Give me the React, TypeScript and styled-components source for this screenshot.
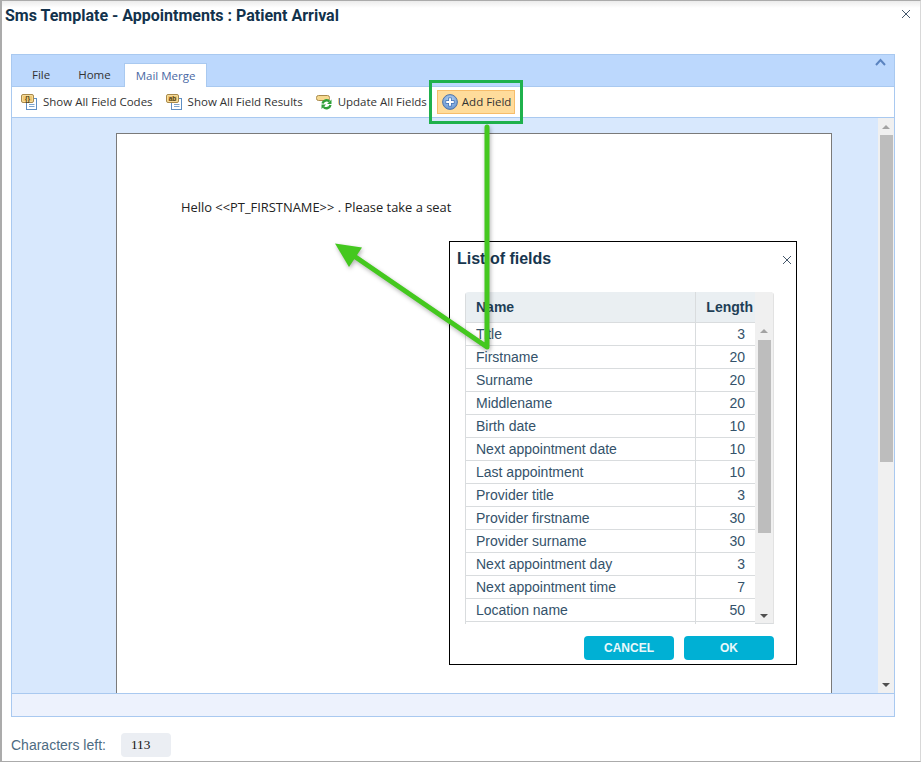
import React from "react";
import styled, { createGlobalStyle } from "styled-components";

const Global = createGlobalStyle`
  html, body { margin: 0; padding: 0; background: #fff; }
  #root { width: 921px; height: 762px; }
  * { box-sizing: border-box; }
`;

const Win = styled.div`
  position: relative;
  width: 921px;
  height: 762px;
  overflow: hidden;
  background: #fff;
  border-left: 2px solid #ababab;
  border-right: 1px solid #d8d8d8;
  border-top: 1px solid #ababab;
  border-bottom: 1px solid #ababab;
  display: flex;
  flex-direction: column;
  padding: 0 25px 0 9px;
`;
const TitleBar = styled.div`
  height: 53px;
  margin: 0 -25px 0 -9px;
  padding: 5px 10px 0 3px;
  display: flex;
  justify-content: space-between;
  align-items: flex-start;
  background: linear-gradient(#ececec 0, #fff 7px);
`;
const Title = styled.h1`
  margin: 0;
  font: 700 16px/20px Roboto, "Liberation Sans", sans-serif;
  color: #12324c;
  white-space: nowrap;
`;
const CloseBtn = styled.svg`
  display: block;
  margin-top: 4px;
  width: 8px;
  height: 8px;
  stroke: #44566a;
  stroke-width: 1;
  fill: none;
`;
const Editor = styled.div`
  width: 884px;
  height: 663px;
  flex: none;
  border: 1px solid #a9c9f0;
  display: flex;
  flex-direction: column;
  background: #d8e8fd;
`;
const TabBar = styled.div`
  height: 32px;
  flex: none;
  background: #bcd8fd;
  display: flex;
  align-items: flex-end;
  padding-left: 9px;
  position: relative;
  border-bottom: 1px solid #a9c9f0;
`;
const Tab = styled.div<{ $active?: boolean }>`
  height: ${(p) => (p.$active ? "24px" : "23px")};
  padding: ${(p) => (p.$active ? "0 11px" : "0 10px 0 11px")};
  margin-bottom: ${(p) => (p.$active ? "-1px" : "0")};
  margin-left: ${(p) => (p.$active ? "-4px" : "0")};
  margin-right: ${(p) => (p.$active ? "0" : "7px")};
  display: flex;
  align-items: center;
  font: 11.5px "Open Sans", sans-serif;
  color: ${(p) => (p.$active ? "#4a69a4" : "#333")};
  background: ${(p) => (p.$active ? "#fff" : "transparent")};
  border: ${(p) => (p.$active ? "1px solid #a9c9f0" : "0")};
  border-bottom: 0;
`;
const Collapse = styled.svg`
  position: absolute;
  right: 8px;
  top: 3px;
  width: 11px;
  height: 8px;
  fill: none;
  stroke: #5b84c0;
  stroke-width: 2;
`;
const Ribbon = styled.div`
  height: 31px;
  flex: none;
  background: #fff;
  border-bottom: 1px solid #a9c9f0;
  display: flex;
  align-items: center;
  padding-left: 9px;
  gap: 13px;
`;
const RibbonBtn = styled.div<{ $hot?: boolean }>`
  display: flex;
  align-items: center;
  gap: 5px;
  font: 11.5px "Open Sans", sans-serif;
  color: #333;
  height: 24px;
  white-space: nowrap;
  ${(p) =>
    p.$hot &&
    `
    background: #ffdc9b;
    border: 1px solid #f7bd6a;
    padding: 0 3px 0 4px;
    margin-left: -3px;
    gap: 4px;
  `}
`;
const BtnLabel = styled.span`
  margin-top: -1px;
`;
const Workspace = styled.div`
  flex: 1;
  min-height: 0;
  display: flex;
  overflow: hidden;
`;
const DocArea = styled.div`
  flex: 1;
  padding: 15px 0 0 104px;
`;
const Page = styled.div`
  width: 716px;
  height: 600px;
  background: #fff;
  border: 1px solid #7a7a7a;
  padding: 65px 0 0 64px;
  font: 12.9px/16px "Open Sans", sans-serif;
  color: #222;
`;
const VScroll = styled.div<{ $w: number }>`
  width: ${(p) => p.$w}px;
  flex: none;
  background: #f0f0f0;
  display: flex;
  flex-direction: column;
  align-items: center;
`;
const ArrowBox = styled.div<{ $h: number }>`
  height: ${(p) => p.$h}px;
  flex: none;
  display: flex;
  align-items: center;
  justify-content: center;
`;
const Tri = styled.div<{ $up?: boolean; $dark?: boolean }>`
  width: 0;
  height: 0;
  border-left: 4px solid transparent;
  border-right: 4px solid transparent;
  ${(p) =>
    p.$up
      ? `border-bottom: 4px solid ${p.$dark ? "#505050" : "#a3a3a3"};`
      : `border-top: 4px solid ${p.$dark ? "#505050" : "#a3a3a3"};`}
`;
const Thumb = styled.div<{ $w: number; $h: number }>`
  width: ${(p) => p.$w}px;
  height: ${(p) => p.$h}px;
  flex: none;
  background: #bdbdbd;
`;
const Spacer = styled.div`
  flex: 1;
`;
const StatusBar = styled.div`
  height: 23px;
  flex: none;
  background: #edf2fd;
  border-top: 1px solid #a9c9f0;
`;
const Footer = styled.div`
  display: flex;
  align-items: center;
  gap: 15px;
  margin-top: 16px;
`;
const FootLabel = styled.span`
  font: 14px "Liberation Sans", sans-serif;
  color: #4d6b82;
`;
const Counter = styled.div`
  width: 50px;
  height: 24px;
  background: #ebeef3;
  border-radius: 4px;
  padding-left: 10px;
  font: 13.3px/23px "Liberation Serif", serif;
  color: #111;
`;
const Dialog = styled.div`
  position: absolute;
  left: 447px;
  top: 240px;
  width: 348px;
  height: 424px;
  background: #fff;
  border: 1px solid #000;
  display: flex;
  flex-direction: column;
  padding: 0 22px 0 15px;
`;
const DialogClose = styled(CloseBtn)`
  position: absolute;
  right: 5px;
  top: 14px;
  margin: 0;
`;
const DialogTitle = styled.h2`
  margin: 7px 0 0 -8px;
  height: 43px;
  font: 700 16px/20px "Liberation Sans", sans-serif;
  color: #17364e;
`;
const FieldTable = styled.div`
  width: 309px;
  height: 332px;
  flex: none;
  display: flex;
  background: #f0f0f0;
  border-radius: 4px 4px 0 0;
  overflow: hidden;
`;
const TableMain = styled.div`
  width: 290px;
  flex: none;
  overflow: hidden;
  background: #fff;
`;
const Row = styled.div<{ $head?: boolean }>`
  display: grid;
  grid-template-columns: 230px 60px;
  height: ${(p) => (p.$head ? 31 : 23)}px;
  background: ${(p) => (p.$head ? "#eaeff2" : "#fff")};
  border-bottom: 1px solid #d9dcde;
  border-left: 1px solid #d9dcde;
  font: ${(p) => (p.$head ? 700 : 400)} 14px/${(p) => (p.$head ? 30 : 22)}px "Liberation Sans", sans-serif;
  color: ${(p) => (p.$head ? "#1f3f57" : "#34526a")};
`;
const StubRow = styled(Row)`
  height: 10px;
`;
const NameCell = styled.div`
  padding-left: 10px;
  border-right: 1px solid #d9dcde;
  white-space: nowrap;
`;
const LenCell = styled.div<{ $head?: boolean }>`
  text-align: right;
  padding-right: ${(p) => (p.$head ? 3 : 11)}px;
`;
const TableScroll = styled(VScroll)`
  border-right: 1px solid #e2e2e2;
  border-bottom: 1px solid #d9dcde;
  padding-top: 30px;
`;
const DialogButtons = styled.div`
  display: flex;
  justify-content: flex-end;
  gap: 10px;
  margin-top: 12px;
  width: 309px;
`;
const PrimaryBtn = styled.button`
  width: 90px;
  height: 24px;
  border: 0;
  border-radius: 4px;
  padding: 0;
  background: #00b0d4;
  color: #e8f8fb;
  font: 700 12px "Liberation Sans", sans-serif;
`;
const Callout = styled.div`
  position: absolute;
  left: 427px;
  top: 79px;
  width: 94px;
  height: 44px;
  border: 3px solid #1fb14c;
`;
const Overlay = styled.svg`
  position: absolute;
  left: -2px;
  top: -1px;
  width: 921px;
  height: 762px;
  pointer-events: none;
  filter: drop-shadow(1px 2px 2px rgba(0, 0, 0, 0.3));
`;

const rows: [string, number][] = [
  ["Title", 3],
  ["Firstname", 20],
  ["Surname", 20],
  ["Middlename", 20],
  ["Birth date", 10],
  ["Next appointment date", 10],
  ["Last appointment", 10],
  ["Provider title", 3],
  ["Provider firstname", 30],
  ["Provider surname", 30],
  ["Next appointment day", 3],
  ["Next appointment time", 7],
  ["Location name", 50],
];

const DocIcon = ({ label }: { label: string }) => (
  <svg width="17" height="16" viewBox="0 0 17 16">
    <rect x="5.500" y="4.500" width="10" height="11" fill="#fff" stroke="#5f8fc4" />
    <path d="M8 10.500h5.500M8 12.500h5.500" stroke="#7ea4cc" />
    <rect x="0.500" y="0.500" width="12" height="8" rx="1.500" fill="#f6dc9c" stroke="#a88a4c" />
    <rect x="2" y="2" width="9" height="5" fill="#f0c873" />
    <text x="6.500" y="6.800" fontSize="6.500" fontWeight="700" textAnchor="middle" fontFamily="Liberation Sans" fill="#4d3d18">
      {label}
    </text>
  </svg>
);

const UpdateIcon = () => (
  <svg width="17" height="16" viewBox="0 0 17 16">
    <rect x="0.500" y="1.500" width="13" height="5" rx="2" fill="#f6d98f" stroke="#a88a4c" />
    <path d="M6.500 9.500A4.200 4.200 0 0 1 13.500 7.500" fill="none" stroke="#2f9f38" strokeWidth="2.400" />
    <path d="M14.500 11A4.200 4.200 0 0 1 7.500 13" fill="none" stroke="#2f9f38" strokeWidth="2.400" />
    <path d="M15.500 5.500v4.500h-4.500zM5.500 15v-4.500h4.500z" fill="#2f9f38" />
  </svg>
);

const AddIcon = () => (
  <svg width="16" height="16" viewBox="0 0 16 16">
    <defs>
      <radialGradient id="addBall" cx="50%" cy="35%" r="70%">
        <stop offset="0" stopColor="#bcd6f2" />
        <stop offset="1" stopColor="#5f8fce" />
      </radialGradient>
    </defs>
    <circle cx="8" cy="8" r="7.400" fill="url(#addBall)" stroke="#5275a6" />
    <path d="M8 3.500v9M3.500 8h9" stroke="#3f70b4" strokeWidth="3.400" />
    <path d="M8 4.200v7.600M4.200 8h7.600" stroke="#fff" strokeWidth="2" />
  </svg>
);

export default function App() {
  return (
    <Win>
      <Global />
      <TitleBar>
        <Title>Sms Template - Appointments : Patient Arrival</Title>
        <CloseBtn viewBox="0 0 8 8">
          <path d="M0 0l8 8M8 0l-8 8" />
        </CloseBtn>
      </TitleBar>
      <Editor>
        <TabBar>
          <Tab>File</Tab>
          <Tab>Home</Tab>
          <Tab $active>Mail Merge</Tab>
          <Collapse viewBox="0 0 11 8">
            <path d="M1 7l4.500-5 4.500 5" />
          </Collapse>
        </TabBar>
        <Ribbon>
          <RibbonBtn>
            <DocIcon label="{}" />
            <BtnLabel>Show All Field Codes</BtnLabel>
          </RibbonBtn>
          <RibbonBtn>
            <DocIcon label="ab" />
            <BtnLabel>Show All Field Results</BtnLabel>
          </RibbonBtn>
          <RibbonBtn>
            <UpdateIcon />
            <BtnLabel>Update All Fields</BtnLabel>
          </RibbonBtn>
          <RibbonBtn $hot>
            <AddIcon />
            <BtnLabel>Add Field</BtnLabel>
          </RibbonBtn>
        </Ribbon>
        <Workspace>
          <DocArea>
            <Page>Hello &lt;&lt;PT_FIRSTNAME&gt;&gt; . Please take a seat</Page>
          </DocArea>
          <VScroll $w={16}>
            <ArrowBox $h={17}>
              <Tri $up />
            </ArrowBox>
            <Thumb $w={13} $h={327} />
            <Spacer />
            <ArrowBox $h={16}>
              <Tri $dark />
            </ArrowBox>
          </VScroll>
        </Workspace>
        <StatusBar />
      </Editor>
      <Footer>
        <FootLabel>Characters left:</FootLabel>
        <Counter>113</Counter>
      </Footer>
      <Dialog>
        <DialogClose viewBox="0 0 8 8">
          <path d="M0 0l8 8M8 0l-8 8" />
        </DialogClose>
        <DialogTitle>List of fields</DialogTitle>
        <FieldTable>
          <TableMain>
            <Row $head>
              <NameCell>Name</NameCell>
              <LenCell $head>Length</LenCell>
            </Row>
            {rows.map(([n, l]) => (
              <Row key={n}>
                <NameCell>{n}</NameCell>
                <LenCell>{l}</LenCell>
              </Row>
            ))}
            <StubRow>
              <NameCell />
            </StubRow>
          </TableMain>
          <TableScroll $w={19}>
            <ArrowBox $h={18}>
              <Tri $up />
            </ArrowBox>
            <Thumb $w={13} $h={193} />
            <Spacer />
            <ArrowBox $h={14}>
              <Tri $dark />
            </ArrowBox>
          </TableScroll>
        </FieldTable>
        <DialogButtons>
          <PrimaryBtn>CANCEL</PrimaryBtn>
          <PrimaryBtn>OK</PrimaryBtn>
        </DialogButtons>
      </Dialog>
      <Callout />
      <Overlay viewBox="0 0 921 762">
        <path d="M487 127V347L354 256" fill="none" stroke="#44c81f" strokeWidth="5" strokeLinecap="round" strokeLinejoin="round" />
        <path d="M335 243.500L362 247.500L349 267Z" fill="#44c81f" />
      </Overlay>
    </Win>
  );
}
